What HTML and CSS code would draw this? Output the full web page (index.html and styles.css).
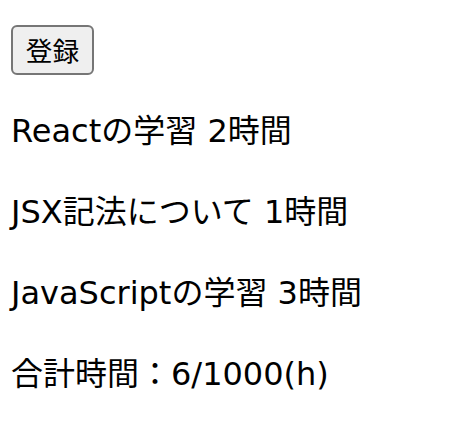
FILE: index.html
```html
<!DOCTYPE html>
<html lang="ja">
<head>
<meta charset="utf-8">
<title>学習記録</title>
<link rel="stylesheet" href="styles.css">
</head>
<body>
<div class="app">
  <div class="form">
    <button class="register" type="button">登録</button>
  </div>
  <div class="records">
    <p class="record">Reactの学習 2時間</p>
    <p class="record">JSX記法について 1時間</p>
    <p class="record">JavaScriptの学習 3時間</p>
    <p class="record">合計時間：6/1000(h)</p>
  </div>
</div>
</body>
</html>
```
FILE: styles.css
```css
html, body {
  margin: 0;
  padding: 0;
  background: #ffffff;
}
.app {
  padding: 25px 10px 0 11px;
  font-family: "DejaVu Sans", "Noto Sans CJK JP", sans-serif;
  color: #000000;
}
.form {
  display: flex;
}
.register {
  font-family: "Noto Sans CJK JP", sans-serif;
  font-size: 26.67px;
  line-height: 40px;
  height: 50px;
  width: 83px;
  padding: 0;
  border: 2px solid #767676;
  border-radius: 6px;
  background: #efefef;
  color: #000000;
}
.records {
  display: flex;
  flex-direction: column;
  gap: 33px;
  margin-top: 32px;
}
.record {
  margin: 0;
  font-size: 32px;
  line-height: 48px;
}
.record-jsx {
  letter-spacing: 0;
}
```
